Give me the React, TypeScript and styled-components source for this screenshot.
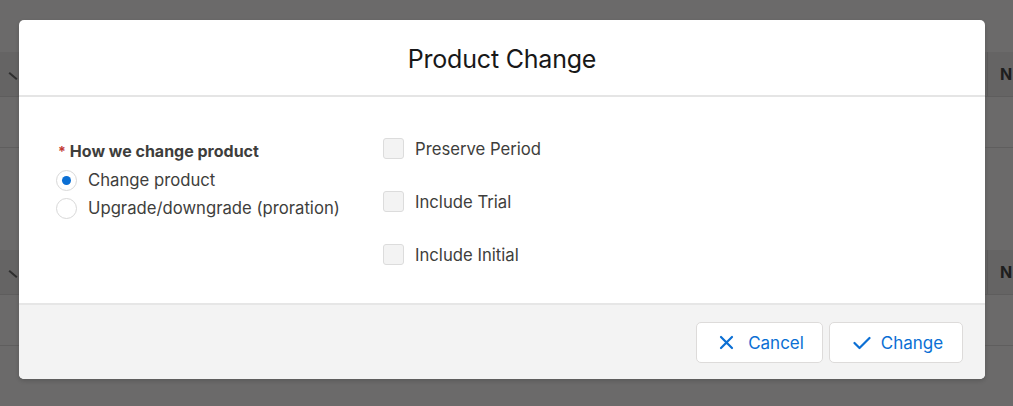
import React from "react";
import styled, { createGlobalStyle } from "styled-components";

const Global = createGlobalStyle`
  html, body { margin: 0; padding: 0; }
  body { font-family: "Inter", "Liberation Sans", sans-serif; background: #6b6a6a; }
  * { box-sizing: border-box; }
`;

const Page = styled.div`
  position: relative;
  width: 1013px;
  height: 406px;
  overflow: hidden;
  background: #6b6a6a;
  display: flex;
  flex-direction: column;
`;

const TopStrip = styled.div`
  height: 52px;
`;

const Spacer = styled.div<{ $h: number }>`
  height: ${(p) => p.$h}px;
`;

const HeaderRow = styled.div`
  height: 45px;
  background: #656464;
  border-bottom: 1px solid #5e5d5d;
  display: flex;
  align-items: center;
  justify-content: space-between;
  padding: 0 0 0 8px;
`;

const DataRow = styled.div`
  height: 51px;
  border-bottom: 1px solid #5f5e5e;
`;

const Chevron = styled.span`
  display: block;
  width: 10px;
  height: 2px;
  background: #2e2e2e;
  transform: rotate(40deg);
  margin-top: 4px;
`;

const ColHead = styled.span`
  display: flex;
  align-items: center;
  height: 100%;
  padding-left: 12px;
  border-left: 1px solid #5c5b5b;
  width: 26px;
  font-weight: 700;
  font-size: 16px;
  color: #1e1e1e;
  overflow: hidden;
`;

const Modal = styled.div`
  position: absolute;
  left: 19px;
  top: 20px;
  width: 966px;
  height: 359px;
  background: #fff;
  border-radius: 5px;
  box-shadow: 0 2px 4px rgba(0, 0, 0, 0.16);
  display: flex;
  flex-direction: column;
  overflow: hidden;
`;

const Header = styled.div`
  height: 77px;
  border-bottom: 2px solid #e5e5e5;
  display: flex;
  align-items: center;
  justify-content: center;
  padding-top: 2px;
`;

const Title = styled.h2`
  margin: 0;
  font-weight: 400;
  font-size: 25px;
  color: #181818;
  letter-spacing: -0.2px;
`;

const Body = styled.div`
  flex: 1;
  display: flex;
  padding: 0 0 0 37px;
`;

const LeftCol = styled.div`
  width: 327px;
  padding-top: 44px;
  display: flex;
  flex-direction: column;
`;

const GroupLabel = styled.div`
  display: flex;
  align-items: center;
  font-weight: 700;
  font-size: 16px;
  color: #3e3e3c;
  margin-bottom: 5px;
  padding-left: 2px;
`;

const Req = styled.span`
  color: #c23934;
  font-size: 14px;
  margin-right: 4px;
`;

const RadioRow = styled.label`
  display: flex;
  align-items: center;
  height: 28px;
  font-size: 16.7px;
  color: #3e3e3c;
  gap: 11px;
`;

const Radio = styled.span<{ $checked?: boolean }>`
  width: 21px;
  height: 21px;
  border-radius: 50%;
  border: 1px solid #d8d8d8;
  background: #fff;
  display: flex;
  align-items: center;
  justify-content: center;
  &::after {
    content: "";
    width: 9px;
    height: 9px;
    border-radius: 50%;
    background: ${(p) => (p.$checked ? "#0b6fd4" : "transparent")};
  }
`;

const RightCol = styled.div`
  padding-top: 41px;
  display: flex;
  flex-direction: column;
  gap: 32px;
`;

const CheckRow = styled.label`
  display: flex;
  align-items: center;
  gap: 11px;
  height: 21px;
  font-size: 16.7px;
  color: #3e3e3c;
`;

const Box = styled.span`
  width: 21px;
  height: 21px;
  border: 1px solid #dcdcdc;
  border-radius: 3px;
  background: #f3f3f3;
`;

const Footer = styled.div`
  height: 76px;
  background: #f3f3f3;
  border-top: 2px solid #e6e6e6;
  display: flex;
  align-items: center;
  justify-content: flex-end;
  gap: 6px;
  padding: 0 22px 0 0;
`;

const Button = styled.button<{ $w: number; $gap: number }>`
  width: ${(p) => p.$w}px;
  height: 41px;
  background: #fff;
  border: 1px solid #dddbda;
  border-radius: 5px;
  display: flex;
  align-items: center;
  justify-content: center;
  gap: ${(p) => p.$gap}px;
  font-family: "Inter", "Liberation Sans", sans-serif;
  font-size: 17px;
  color: #0b6fd4;
  padding: 0 0 0 4px;
  margin-top: 1px;
`;

const XIcon = () => (
  <svg width="15" height="15" viewBox="0 0 15 15">
    <path d="M2 2 L13 13 M13 2 L2 13" stroke="#0b6fd4" strokeWidth="2.2" strokeLinecap="round" />
  </svg>
);

const CheckIcon = () => (
  <svg width="18" height="14" viewBox="0 0 18 14">
    <path d="M1.5 7 L6.5 12 L16.5 2" stroke="#0b6fd4" strokeWidth="2.2" fill="none" strokeLinecap="round" strokeLinejoin="round" />
  </svg>
);

export default function App() {
  return (
    <>
      <Global />
      <Page>
        <TopStrip />
        <HeaderRow>
          <Chevron />
          <ColHead>N</ColHead>
        </HeaderRow>
        <DataRow />
        <Spacer $h={102} />
        <HeaderRow>
          <Chevron />
          <ColHead>N</ColHead>
        </HeaderRow>
        <DataRow />
        <Modal>
          <Header>
            <Title>Product Change</Title>
          </Header>
          <Body>
            <LeftCol>
              <GroupLabel>
                <Req>*</Req>How we change product
              </GroupLabel>
              <RadioRow>
                <Radio $checked />
                Change product
              </RadioRow>
              <RadioRow>
                <Radio />
                Upgrade/downgrade (proration)
              </RadioRow>
            </LeftCol>
            <RightCol>
              <CheckRow>
                <Box />
                Preserve Period
              </CheckRow>
              <CheckRow>
                <Box />
                Include Trial
              </CheckRow>
              <CheckRow>
                <Box />
                Include Initial
              </CheckRow>
            </RightCol>
          </Body>
          <Footer>
            <Button $w={127} $gap={14}>
              <XIcon />
              Cancel
            </Button>
            <Button $w={134} $gap={10}>
              <CheckIcon />
              Change
            </Button>
          </Footer>
        </Modal>
      </Page>
    </>
  );
}
